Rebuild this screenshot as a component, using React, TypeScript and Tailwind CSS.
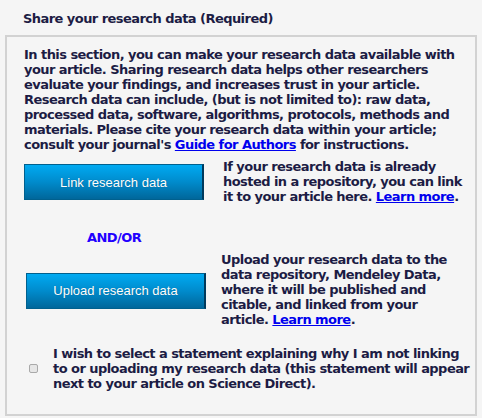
import React from "react";

const body = "font-['DejaVu_Sans',Verdana,sans-serif] font-bold text-[13px] leading-[15px] tracking-[-0.55px] text-[#1c1c44]";

function BlueButton({ label }: { label: string }) {
  return (
    <button
      type="button"
      className="w-[180px] h-[36px] shrink-0 border border-[#00608e] border-r-2 border-r-[#003a5c] bg-gradient-to-b from-[#00aaf2] via-[#008bcc] to-[#00679b] font-['Liberation_Sans',Arial,sans-serif] font-normal text-[13px] tracking-normal text-white [text-shadow:0_0_1px_rgba(0,0,0,0.3)]"
    >
      {label}
    </button>
  );
}

export default function App() {
  return (
    <div className={`w-[482px] h-[418px] bg-[#f5f5f5] pt-[11px] ${body}`}>
      <div className="pl-[23px]">Share your research data (Required)</div>

      <div className="mx-[5px] mt-[9px] h-[381px] border-2 border-[#d2d2d2] pl-[17px] pr-[10px] pt-[10px]">
        <p>
          In this section, you can make your research data available with your article. Sharing research data
          helps other researchers evaluate your findings, and increases trust in your article. Research data can
          include, (but is not limited to): raw data, processed data, software, algorithms, protocols, methods and
          materials. Please cite your research data within your article; consult your journal's{" "}
          <a href="#" className="text-[#0000ee] underline">Guide for Authors</a> for instructions.
        </p>

        <div className="mt-[7px] flex items-center">
          <div className="w-[199px] shrink-0 pt-[1px]">
            <BlueButton label="Link research data" />
          </div>
          <p className="w-[245px]">
            If your research data is already hosted in a repository, you can link it to your article here.{" "}
            <a href="#" className="text-[#0000ee] underline">Learn more</a>.
          </p>
        </div>

        <div className="w-[180px] mt-[26px] text-center text-[#2200ff]">AND/OR</div>

        <div className="mt-[7px] flex items-center">
          <div className="w-[197px] shrink-0 pl-[2px] pt-[2px]">
            <BlueButton label="Upload research data" />
          </div>
          <p className="w-[230px]">
            Upload your research data to the data repository, Mendeley Data, where it will be published and
            citable, and linked from your article.{" "}
            <a href="#" className="text-[#0000ee] underline">Learn more</a>.
          </p>
        </div>

        <label className="mt-[19px] flex items-center">
          <span className="ml-[5px] mr-[15px] w-[9px] h-[9px] shrink-0 rounded-[2px] border border-[#a9a9a9] bg-[#e6e6e6]" />
          <span className="shrink-0 whitespace-nowrap">
            I wish to select a statement explaining why I am not linking
            <br />
            to or uploading my research data (this statement will appear
            <br />
            next to your article on Science Direct).
          </span>
        </label>
      </div>
    </div>
  );
}
